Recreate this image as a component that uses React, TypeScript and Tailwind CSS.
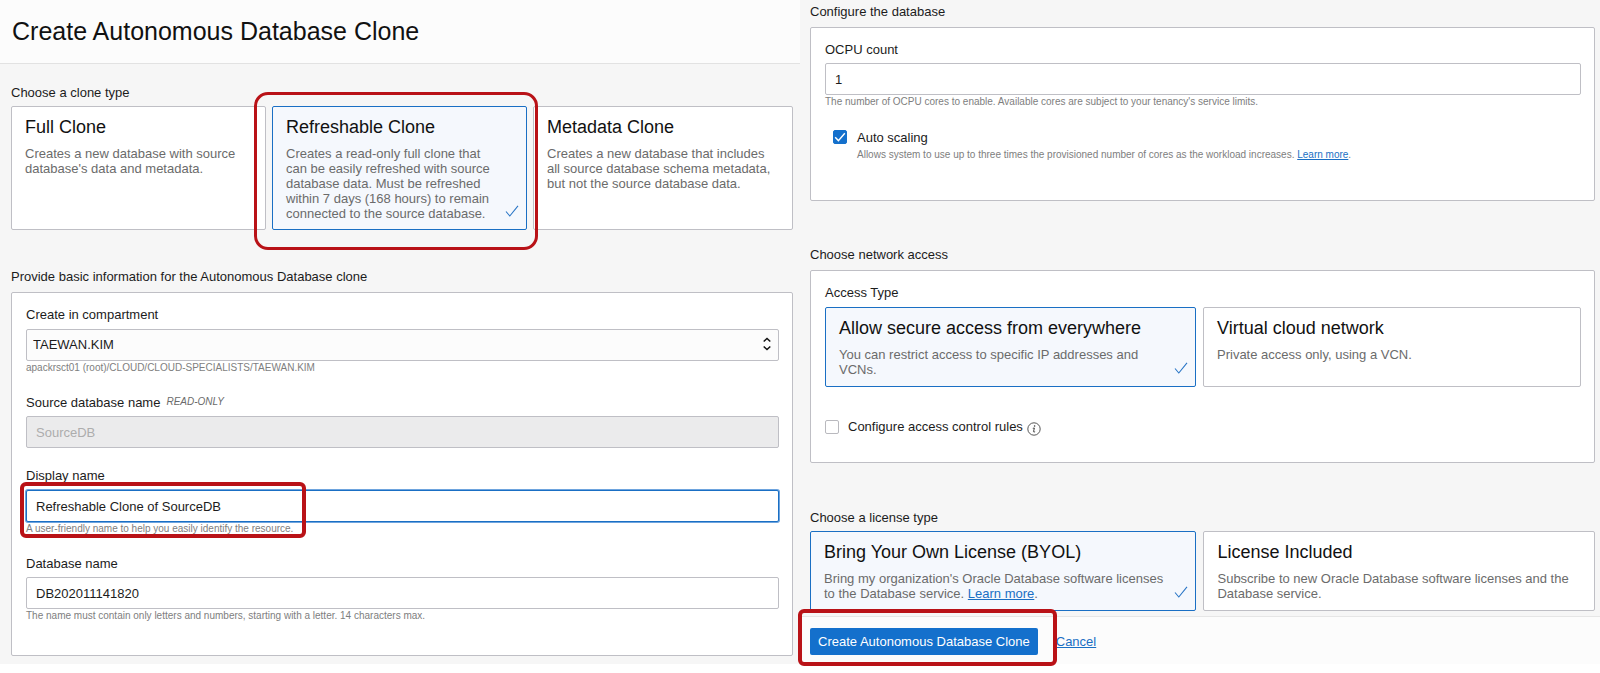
import React from "react";

const controlBase =
  "block h-8 w-full rounded-[2px] border px-[9px] text-[13px] leading-5 outline-none";

type Tone = "soft" | "thick";

function Highlight({ className, tone = "thick" }: { className: string; tone?: Tone }) {
  const shape =
    tone === "soft" ? "rounded-[14px] border-[3px]" : "rounded-[6px] border-[4px]";
  return (
    <div
      aria-hidden="true"
      className={`pointer-events-none absolute z-10 border-[#b91217] ${shape} ${className}`}
    />
  );
}

function SectionHeading({ children }: { children: React.ReactNode }) {
  return <h2 className="text-[13px] leading-5">{children}</h2>;
}

function Panel({ className, children }: { className: string; children: React.ReactNode }) {
  return (
    <div
      className={`rounded-[2px] border border-[#bfbfc5] bg-white pl-[14px] pr-[13px] pt-3 ${className}`}
    >
      {children}
    </div>
  );
}

function Hint({ children }: { children: React.ReactNode }) {
  return <p className="pt-px text-[10px] leading-3 text-[#7e7e7e]">{children}</p>;
}

type ChoiceProps = {
  group: string;
  title: string;
  selected?: boolean;
  className: string;
  children: React.ReactNode;
};

function Choice({ group, title, selected, className, children }: ChoiceProps) {
  const colours = selected
    ? "border-[#1a6fc4] bg-[#f5f8fd]"
    : "border-[#bfbfc5] bg-white";
  return (
    <label
      className={`relative block cursor-pointer rounded-[2px] border pl-[13px] pt-2 ${colours} ${className}`}
    >
      <input type="radio" name={group} defaultChecked={selected} className="sr-only" />
      <span className="block text-[18px] leading-6 text-[#111]">{title}</span>
      <span className="mt-[7px] block text-[13px] leading-[15px] text-[#6b6b6b]">{children}</span>
      {selected && (
        <svg
          viewBox="0 0 14 12"
          className="absolute bottom-3 right-[7px] h-3 w-[14px]"
          fill="none"
          stroke="#2a76c6"
          strokeWidth="1.1"
        >
          <path d="M1 6.5 L4.8 11 L13 0.8" />
        </svg>
      )}
    </label>
  );
}

export default function App() {
  return (
    <div className="min-h-screen bg-white font-['Liberation_Sans',Arial,sans-serif] text-[13px] text-[#1c1c1c]">
      <main className="grid grid-cols-2 bg-[#f6f6f6]">
        <div className="pb-2">
          <header className="border-b border-[#e2e2e2] bg-[#fcfcfc] pl-3">
            <h1 className="py-4 text-[25px] leading-[31px] text-[#111]">
              Create Autonomous Database Clone
            </h1>
          </header>

          <div className="pl-[11px] pr-[7px] pt-[19px]">
            <section>
              <SectionHeading>Choose a clone type</SectionHeading>
              <div className="relative mt-[3px] grid grid-cols-[255fr_255fr_260fr] gap-[6px]">
                <Choice group="clone" title="Full Clone" className="min-h-[124px] pr-4">
                  Creates a new database with source database's data and metadata.
                </Choice>
                <div className="relative">
                  <Choice
                    group="clone"
                    title="Refreshable Clone"
                    selected
                    className="min-h-[124px] pr-8"
                  >
                    Creates a read-only full clone that can be easily refreshed with source
                    database data. Must be refreshed within 7 days (168 hours) to remain
                    connected to the source database.
                  </Choice>
                  <Highlight
                    tone="soft"
                    className="-bottom-5 -left-[18px] -right-[11px] -top-[14px]"
                  />
                </div>
                <Choice group="clone" title="Metadata Clone" className="min-h-[124px] pr-3">
                  Creates a new database that includes all source database schema metadata,
                  but not the source database data.
                </Choice>
              </div>
            </section>

            <section className="mt-[37px]">
              <SectionHeading>
                Provide basic information for the Autonomous Database clone
              </SectionHeading>
              <Panel className="mt-[5px] pb-[33px]">
                <div className="pb-[19px]">
                  <label htmlFor="compartment" className="block pb-1 leading-5">
                    Create in compartment
                  </label>
                  <div className="relative">
                    <select
                      id="compartment"
                      className="block h-8 w-full appearance-none rounded-[2px] border border-[#bfbfc5] bg-[#fcfcfc] px-[6px] text-[13px] outline-none"
                    >
                      <option>TAEWAN.KIM</option>
                    </select>
                    <svg
                      viewBox="0 0 8 14"
                      className="pointer-events-none absolute right-2 top-2 h-[14px] w-2"
                      fill="none"
                      stroke="#111"
                      strokeWidth="1.5"
                    >
                      <path d="M0.7 4.5 L4 1.5 L7.3 4.5 M0.7 9.5 L4 12.5 L7.3 9.5" />
                    </svg>
                  </div>
                  <Hint>apackrsct01 (root)/CLOUD/CLOUD-SPECIALISTS/TAEWAN.KIM</Hint>
                </div>

                <div className="pb-[18px]">
                  <div className="flex gap-[6px] pb-[3px]">
                    <label htmlFor="source" className="leading-5">
                      Source database name
                    </label>
                    <span className="text-[10px] italic leading-[18px] text-[#6b6b6b]">
                      READ-ONLY
                    </span>
                  </div>
                  <input
                    id="source"
                    readOnly
                    defaultValue="SourceDB"
                    className={`${controlBase} border-[#bfbfc5] bg-[#ebebec] text-[#adadad]`}
                  />
                </div>

                <div className="relative pb-[19px]">
                  <label htmlFor="display" className="block pb-1 leading-5">
                    Display name
                  </label>
                  <input
                    id="display"
                    defaultValue="Refreshable Clone of SourceDB"
                    className={`${controlBase} border-[#1a6fc4] bg-white shadow-[0_0_0_1px_#6ea4de]`}
                  />
                  <Hint>A user-friendly name to help you easily identify the resource.</Hint>
                  <Highlight className="-left-[6px] bottom-4 top-4 w-[286px]" />
                </div>

                <div>
                  <label htmlFor="dbname" className="block pb-[3px] leading-5">
                    Database name
                  </label>
                  <input
                    id="dbname"
                    defaultValue="DB202011141820"
                    className={`${controlBase} border-[#bfbfc5] bg-white`}
                  />
                  <Hint>
                    The name must contain only letters and numbers, starting with a letter. 14
                    characters max.
                  </Hint>
                </div>
              </Panel>
            </section>
          </div>
        </div>

        <div className="flex flex-col">
          <div className="pb-[5px] pl-[10px] pr-[5px] pt-[2px]">
            <section>
              <SectionHeading>Configure the database</SectionHeading>
              <Panel className="mt-[5px] pb-[39px]">
                <label htmlFor="ocpu" className="block pb-[3px] leading-5">
                  OCPU count
                </label>
                <input
                  id="ocpu"
                  defaultValue="1"
                  className={`${controlBase} border-[#bfbfc5] bg-white`}
                />
                <Hint>
                  The number of OCPU cores to enable. Available cores are subject to your
                  tenancy's service limits.
                </Hint>
                <div className="mt-5 flex gap-[10px] pl-2">
                  <span className="relative mt-[2px] block h-[14px] w-[14px]">
                    <input
                      id="scaling"
                      type="checkbox"
                      defaultChecked
                      className="peer block h-[14px] w-[14px] appearance-none rounded-[2px] border border-[#a9a9ae] bg-white checked:border-[#1470cc] checked:bg-[#1470cc]"
                    />
                    <svg
                      viewBox="0 0 14 14"
                      className="pointer-events-none absolute inset-0 hidden peer-checked:block"
                      fill="none"
                      stroke="#fff"
                      strokeWidth="1.4"
                    >
                      <path d="M2.2 7.2 L5.4 10.6 L11.8 3.2" />
                    </svg>
                  </span>
                  <div>
                    <label htmlFor="scaling" className="block leading-5">
                      Auto scaling
                    </label>
                    <Hint>
                      Allows system to use up to three times the provisioned number of cores as
                      the workload increases.{" "}
                      <a href="#scaling-help" className="text-[#1a6fc4] underline">
                        Learn more
                      </a>
                      .
                    </Hint>
                  </div>
                </div>
              </Panel>
            </section>

            <section className="mt-11">
              <SectionHeading>Choose network access</SectionHeading>
              <Panel className="mt-[5px] pb-[25px]">
                <h3 className="pb-1 leading-5">Access Type</h3>
                <div className="grid grid-cols-[371fr_378fr] gap-[7px]">
                  <Choice
                    group="network"
                    title="Allow secure access from everywhere"
                    selected
                    className="min-h-20 pr-12"
                  >
                    You can restrict access to specific IP addresses and VCNs.
                  </Choice>
                  <Choice
                    group="network"
                    title="Virtual cloud network"
                    className="min-h-20 pr-12"
                  >
                    Private access only, using a VCN.
                  </Choice>
                </div>
                <div className="mt-[30px] flex items-center">
                  <input
                    id="rules"
                    type="checkbox"
                    className="block h-[14px] w-[14px] appearance-none rounded-[2px] border border-[#b9b9be] bg-white checked:bg-[#1470cc]"
                  />
                  <label htmlFor="rules" className="pl-[9px] leading-5">
                    Configure access control rules
                  </label>
                  <svg viewBox="0 0 14 14" className="ml-1 mt-1 h-[14px] w-[14px]" fill="none">
                    <circle cx="7" cy="7" r="6.2" stroke="#444" strokeWidth="0.9" />
                    <circle cx="7.6" cy="4" r="0.8" fill="#333" />
                    <path
                      d="M5.8 6.3 L7.4 6 L6.5 9.6 Q6.4 10.5 8.1 9.7"
                      stroke="#333"
                      strokeWidth="0.9"
                    />
                  </svg>
                </div>
              </Panel>
            </section>

            <section className="mt-[45px]">
              <SectionHeading>Choose a license type</SectionHeading>
              <div className="mt-[3px] grid grid-cols-[386fr_391fr] gap-[7px]">
                <Choice
                  group="license"
                  title="Bring Your Own License (BYOL)"
                  selected
                  className="min-h-20 pr-8"
                >
                  Bring my organization's Oracle Database software licenses to the Database
                  service.{" "}
                  <a href="#license-help" className="text-[#1a6fc4] underline">
                    Learn more
                  </a>
                  .
                </Choice>
                <Choice group="license" title="License Included" className="min-h-20 pr-3">
                  Subscribe to new Oracle Database software licenses and the Database service.
                </Choice>
              </div>
            </section>
          </div>

          <footer className="flex grow items-center gap-[18px] border-t border-[#e6e6e6] bg-[#fcfcfc] pl-[10px] pt-[2px]">
            <div className="relative">
              <button
                type="button"
                className="block h-[27px] rounded-[2px] bg-[#1470cc] px-2 text-[13px] text-white"
              >
                Create Autonomous Database Clone
              </button>
              <Highlight className="-bottom-[11px] -left-3 -right-[19px] -top-[19px]" />
            </div>
            <a href="#cancel" className="text-[#1a6fc4] underline">
              Cancel
            </a>
          </footer>
        </div>
      </main>
    </div>
  );
}
